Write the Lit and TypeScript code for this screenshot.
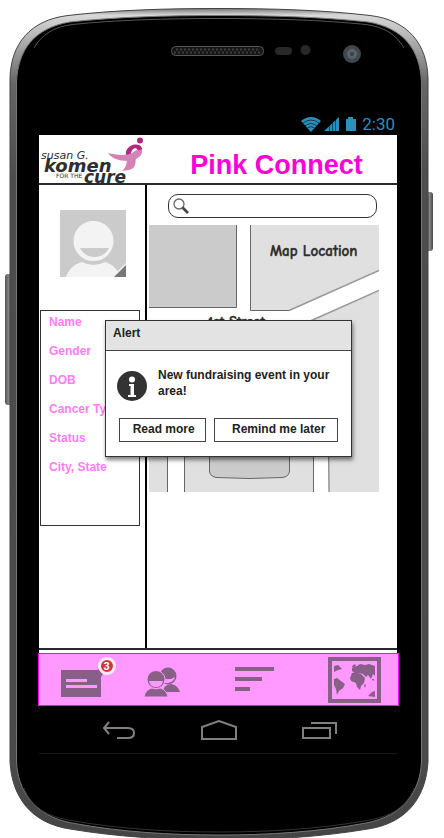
import { LitElement, html, css } from "lit";
import { customElement, state } from "lit/decorators.js";

const FIELDS = ["Name", "Gender", "DOB", "Cancer Type", "Status", "City, State"];

@customElement("phone-case")
class PhoneCase extends LitElement {
  static styles = css`
    :host { display: block; }
    svg { display: block; width: 100%; height: 100%; }
  `;
  render() {
    return html`
      <svg viewBox="0 0 444 838" preserveAspectRatio="none" aria-hidden="true">
        <defs>
          <linearGradient id="metal" x1="0" y1="0" x2="0" y2="1">
            <stop offset="0" stop-color="#777" />
            <stop offset="0.008" stop-color="#d8d8d8" />
            <stop offset="0.03" stop-color="#bbb" />
            <stop offset="0.09" stop-color="#666" />
            <stop offset="0.2" stop-color="#4e4e4e" />
            <stop offset="0.9" stop-color="#4a4a4a" />
            <stop offset="1" stop-color="#444" />
          </linearGradient>
          <linearGradient id="key" x1="0" y1="0" x2="1" y2="0">
            <stop offset="0" stop-color="#555" />
            <stop offset="0.5" stop-color="#888" />
            <stop offset="1" stop-color="#444" />
          </linearGradient>
        </defs>
        <rect x="5" y="274" width="8" height="131" rx="3" fill="url(#key)" />
        <rect x="426" y="192" width="7" height="59" rx="3" fill="url(#key)" />
        <path fill="url(#metal)" stroke="#444" stroke-width="1"
          d="M10 78C11 44 30 20 68 15.500C115 10 165 8.500 219 8.500S323 10 370 15.500C408 20 427 44 428 78V762C426 796 408 823 368 829C320 837 270 840 219 840S118 837 70 829C30 823 12 796 10 762Z" />
        <path fill="#000" stroke="#777" stroke-width="1"
          d="M16.500 82C18 50 34 28 70 22C116 17 165 15.500 219 15.500S322 17 368 22C404 28 420 50 421.500 82V762C420 791 404 816 366 823C318 832 268 835 219 835S120 832 72 823C34 816 18 791 16.500 762Z" />
        <path fill="none" stroke="#555" stroke-width="1"
          d="M34 48C42 34 54 27 72 24.500C116 20 165 18.500 219 18.500S322 20 366 24.500C384 27 396 34 404 48" />
        <path fill="none" stroke="#333" stroke-width="1"
          d="M24 788C31 806 46 817 74 821C120 829 168 832 219 832S318 829 364 821C392 817 407 806 414 788" />
      </svg>
    `;
  }
}

@customElement("komen-logo")
class KomenLogo extends LitElement {
  static styles = css`
    :host { display: block; }
    svg { display: block; overflow: visible; }
    text { font-family: "DejaVu Sans", sans-serif; font-style: italic; fill: #2e2e2e; }
    .small { font-size: 11px; }
    .tiny { font-size: 6px; font-style: normal; }
    .big { font-size: 18px; font-weight: 700; }
    .end { font-size: 17px; }
  `;
  render() {
    return html`
      <svg width="106" height="48" viewBox="0 0 106 48" role="img" aria-label="Susan G. Komen for the Cure">
        <text class="small" x="2" y="24">susan G.</text>
        <text class="big" x="5" y="37">komen</text>
        <text class="tiny" x="17" y="43">FOR THE</text>
        <text class="big end" x="45" y="48">cure</text>
        <circle cx="101" cy="5.500" r="3" fill="#b02a7c" />
        <path fill="#b02a7c" d="M87 20C86 14 91 10 96 9.500C101 9 104 12 103 16L99 17C99 13 96 12.500 94 14C92 16 92 19 91 21Z" />
        <path fill="#d583b4" d="M69 18C76 20 88 21 93 18C96 16 98 14 99 15.500L103 14C104 19 101 22 97 24C96 29 97 33 90 35L83 36C87 33 87 29 88 26C80 26 72 23 69 18Z" />
      </svg>
    `;
  }
}

@customElement("street-map")
class StreetMap extends LitElement {
  static styles = css`
    :host { display: block; }
    svg { display: block; width: 100%; height: auto; }
    text {
      font: 700 15px "Comic Sans MS", "Comic Neue", "Open Sans", sans-serif;
      fill: #2b2b2b;
      stroke: #2b2b2b;
      stroke-width: 0.4px;
    }
    .street { font-size: 14px; }
    .land { fill: #e0e0e0; }
    .block { fill: #cbcbcb; }
    .edge { fill: none; stroke: #666; stroke-width: 1; }
    .road { fill: none; stroke: #999; stroke-width: 1.4; }
  `;
  render() {
    return html`
      <svg viewBox="0 0 230 267" role="img" aria-label="Map">
        <rect class="block" width="88" height="83" />
        <path class="edge" d="M87.500 0V82.500H0" />
        <path class="land" d="M101 0H230V46L141 86H101Z" />
        <path class="edge" d="M101.500 0V85.500H140" />
        <path class="road" d="M140 85.500L230 45.500" />
        <path class="land" d="M230 66L150 101L180 200V267H230Z" />
        <path class="road" d="M230 65.500L150 101" />
        <path class="edge" d="M179.500 200L180 267" />
        <path class="land" d="M0 110H19V267H0Z" />
        <path class="edge" d="M18.500 110V267" />
        <path class="land" d="M35 110H165V267H35Z" />
        <path class="edge" d="M35.500 110V267M164.500 110V267" />
        <path class="block" d="M60 190V246Q61 252 68 252.500L100 253.500L133 252.500Q140 252 140.500 246V190Z" />
        <path class="edge" d="M60.500 190V246Q61 252 68 252.500L100 253.500L133 252.500Q140 252 140.500 246V190" />
        <text x="121" y="31">Map Location</text>
        <text class="street" x="59" y="101">1st Street</text>
      </svg>
    `;
  }
}

const messageIcon = html`
  <svg width="50" height="34" viewBox="0 0 50 34" aria-hidden="true">
    <path fill="#875f87" d="M3 7H39L46 3V9L43 14V34H3Z" />
    <path fill="#ff99ff" d="M8 16H29V19H8ZM8 22H39V25H8Z" />
  </svg>`;

const peopleIcon = html`
  <svg width="36" height="34" viewBox="0 -4 36 34" aria-hidden="true">
    <g fill="#875f87">
      <circle cx="24" cy="9" r="8.500" />
      <path d="M19 25C20 19 22 18 27 17C32 18 34 20 36 25Z" />
    </g>
    <path fill="#ff99ff" d="M19 11Q25 14 31 10Q30 15 24 16L20 16Z" />
    <g fill="#875f87" stroke="#ff99ff" stroke-width="1">
      <path d="M0 30C1 24 5 22 8 21Q12 23 16 21C20 22 23 25 24 30Z" />
      <circle cx="12" cy="12.500" r="9" />
    </g>
    <path fill="#ff99ff" d="M5 14H19Q18 20 12 20Q6 20 5 14Z" />
  </svg>`;

const listIcon = html`
  <svg width="40" height="30" viewBox="0 0 40 30" aria-hidden="true">
    <path fill="#875f87" d="M0 2H39V6H0ZM0 12H27V16H0ZM0 22H15V26H0Z" />
  </svg>`;

const worldIcon = html`
  <svg width="53" height="46" viewBox="0 0 53 46" aria-hidden="true">
    <g fill="#875f87">
      <path fill-rule="evenodd" d="M0 0H53V46H0ZM4 4V42H49V4Z" />
      <path d="M6 9L10 8L14 12L10 13L6 15ZM6 22L9 21L13 24L17 27L15 31L11 34L9 38L8 32L6 28Z" />
      <path d="M22 21L24 16L28 15L33 17L37 21L36 26L33 29L32 33L29 30L28 26L23 24Z" />
      <path d="M24 11L29 9L32 7L37 8L41 7L47 9V19L45 17L43 22L40 18L38 20L35 17L31 16L27 16L24 14Z" />
      <path d="M24 9L27 7L28 9L25 11ZM36 28L38 27L37 31ZM44 22L46 22L46 24L44 23ZM40 39L44 35L47 34V40Z" />
    </g>
  </svg>`;

const backIcon = html`
  <svg width="34" height="20" viewBox="0 0 34 20" aria-hidden="true">
    <path fill="none" stroke="#808080" stroke-width="2" d="M7 2L2 8L7 14M2 8H26Q32 8 32 13Q32 18 26 18H15" />
  </svg>`;
const homeIcon = html`
  <svg width="36" height="20" viewBox="0 0 36 20" aria-hidden="true">
    <path fill="none" stroke="#808080" stroke-width="2" d="M1 19V7L18 1L35 7V19Z" />
  </svg>`;
const recentsIcon = html`
  <svg width="36" height="20" viewBox="0 0 36 20" aria-hidden="true">
    <path fill="none" stroke="#808080" stroke-width="2" d="M1 8H28V18H1ZM9 3H34V14" />
  </svg>`;

@customElement("app-root")
class AppRoot extends LitElement {
  @state() private alertOpen = true;

  static styles = css`
    :host {
      display: block;
      background: #fff;
      font-family: "Liberation Sans", Arial, sans-serif;
      font-size: 12px;
      color: #222;
    }
    * { box-sizing: border-box; }
    button { font: inherit; color: inherit; padding: 0; margin: 0; border: 0; background: none; cursor: pointer; }
    svg { display: block; }

    .device {
      position: relative;
      display: flex;
      flex-direction: column;
      min-height: 100vh;
      padding: 0 47px 84px 39px;
      overflow: hidden;
    }
    .case { position: absolute; inset: 0; }
    .brow {
      position: relative;
      height: 113px;
      padding: 43px 35px 0 132px;
      display: flex;
      align-items: flex-start;
      justify-content: space-between;
    }
    .status {
      position: relative;
      height: 22px;
      padding-right: 2px;
      display: flex;
      align-items: center;
      justify-content: flex-end;
      gap: 5px;
      color: #2b8fbd;
      font: 17px/22px Roboto, sans-serif;
    }

    .screen {
      position: relative;
      flex: 1;
      display: flex;
      flex-direction: column;
      background: #fff;
    }
    header {
      display: flex;
      height: 50px;
      border-bottom: 2px solid #2a2a2a;
    }
    h1 {
      flex: 1;
      margin: 0;
      padding-left: 11px;
      text-align: center;
      font-size: 27px;
      line-height: 60px;
      color: #ff00d4;
    }
    .body {
      flex: 1;
      display: grid;
      grid-template-columns: 108px 1fr;
      margin-bottom: 3px;
      border-bottom: 2px solid #2a2a2a;
    }
    aside { border-right: 2px solid #000; padding: 25px 5px 0 1px; }
    .avatar { margin: 0 auto 33px 20px; }
    .details {
      list-style: none;
      margin: 0;
      padding: 0 0 0 8px;
      height: 216px;
      border: 1px solid #333;
      overflow: hidden;
      white-space: nowrap;
      font-weight: 700;
      color: #ff7cf6;
    }
    .details li { height: 29px; line-height: 22px; }

    main { padding: 9px 18px 0 2px; }
    .search {
      display: flex;
      align-items: center;
      gap: 4px;
      height: 24px;
      margin: 0 2px 7px 19px;
      padding: 0 8px 0 4px;
      border: 1px solid #333;
      border-radius: 10px;
    }
    .search input {
      flex: 1;
      min-width: 0;
      border: 0;
      outline: 0;
      padding: 0;
      background: none;
      font: inherit;
    }

    .alert {
      position: absolute;
      top: 185px;
      left: 66px;
      right: 45px;
      height: 137px;
      background: #fff;
      border: 1px solid #333;
      box-shadow: 1px 3px 4px rgba(0, 0, 0, 0.5);
      font-weight: 700;
    }
    .alert h2 {
      margin: 0;
      height: 30px;
      padding-left: 7px;
      font-size: 12px;
      line-height: 24px;
      background: #e3e3e3;
      border-bottom: 1px solid #444;
    }
    .message { display: flex; gap: 11px; padding: 16px 8px 0 11px; }
    .message svg { flex: none; margin-top: 4px; }
    .message p { margin: 0; line-height: 16px; }
    .actions { display: flex; gap: 8px; padding: 17px 13px 0 13px; }
    .actions button {
      height: 24px;
      border: 1px solid #444;
      font-weight: 700;
      line-height: 20px;
      padding: 0 0 2px 2px;
    }
    .more { flex: 88; }
    .actions .later { flex: 123; padding-left: 5px; }

    .tabs {
      position: relative;
      display: grid;
      grid-template-columns: 87fr 72fr 113fr 87fr;
      align-items: center;
      justify-items: center;
      height: 53px;
      margin: 0 -2px 0 -1px;
      background: #ff99ff;
      border: 1px solid #f0f;
    }
    .tab { position: relative; }
    .badge {
      position: absolute;
      top: -6px;
      right: -8px;
      width: 18px;
      height: 18px;
      border: 3px solid #f6ecf4;
      border-radius: 50%;
      background: #d3343c;
      color: #fff;
      font-size: 11px;
      font-weight: 700;
      line-height: 12px;
      text-align: center;
    }
    .nav {
      position: relative;
      display: flex;
      align-items: center;
      justify-content: space-between;
      height: 48px;
      padding: 0 59px 0 63px;
      border-bottom: 1px solid #161616;
    }
  `;

  private close() { this.alertOpen = false; }

  render() {
    return html`
      <div class="device">
        <phone-case class="case"></phone-case>
        <div class="brow">
          <svg width="142" height="16" viewBox="0 0 142 16" aria-hidden="true">
            <rect x="0.500" y="3.500" width="92" height="9" rx="4" fill="#161616" stroke="#555" />
            <path d="M5 6.500H89M3 9.500H90" stroke="#3c3c3c" stroke-width="2" stroke-dasharray="2 2" />
            <rect x="104" y="4" width="17" height="8" rx="4" fill="#292727" />
            <circle cx="134.500" cy="7" r="5" fill="#292727" />
          </svg>
          <svg width="20" height="22" viewBox="-3 0 20 22" aria-hidden="true">
            <circle cx="7" cy="11" r="9" fill="#41474b" />
            <circle cx="7" cy="11" r="5" fill="#59646a" />
            <circle cx="7" cy="11" r="2" fill="#35424c" />
          </svg>
        </div>
        <div class="status">
          <svg width="56" height="16" viewBox="0 0 56 16" aria-hidden="true">
            <path fill="#2b8fbd" d="M0 5Q10 -3 20 5L10 16Z" />
            <path fill="none" stroke="#000" stroke-width="1" opacity="0.6" d="M2 7Q10 1 18 7M4 10Q10 5 16 10M6 12.500Q10 9 14 12.500" />
            <path fill="#2b8fbd" d="M23 15L38 1V15ZM45 3H47V1H52V3H55V15H45Z" />
            <path stroke="#000" stroke-width="1" d="M28.500 0V15M31.500 0V15M34.500 0V15" opacity="0.5" />
          </svg>
          <span>2:30</span>
        </div>

        <div class="screen">
          <header>
            <komen-logo></komen-logo>
            <h1>Pink Connect</h1>
          </header>
          <div class="body">
            <aside>
              <svg class="avatar" width="66" height="67" viewBox="0 0 66 67" role="img" aria-label="Profile picture">
                <rect width="66" height="67" fill="#cbcbcb" />
                <path fill="#f3f3f3" d="M6 67C8 60 14 54 22 52Q33 58 45 52C53 54 58 60 60 67Z" />
                <circle cx="33.500" cy="31" r="21.500" fill="#f3f3f3" stroke="#cbcbcb" stroke-width="3" />
                <path fill="#cbcbcb" d="M20 38H49Q44 47 34.500 47Q25 47 20 38Z" />
                <path fill="#f3f3f3" d="M52 67L66 53V67Z" />
                <path fill="#777" d="M54 67L66 55V67Z" />
              </svg>
              <ul class="details">
                ${FIELDS.map((f) => html`<li>${f}</li>`)}
              </ul>
            </aside>
            <main>
              <label class="search">
                <svg width="17" height="17" viewBox="0 0 17 17" aria-hidden="true">
                  <circle cx="6" cy="6" r="5" fill="none" stroke="#666" stroke-width="1.300" />
                  <path d="M9.500 9.500L15 15" stroke="#444" stroke-width="2.600" />
                </svg>
                <input type="search" aria-label="Search" />
              </label>
              <street-map></street-map>
            </main>
          </div>
          ${this.alertOpen
            ? html`
                <section class="alert" role="alertdialog" aria-labelledby="alert-title">
                  <h2 id="alert-title">Alert</h2>
                  <div class="message">
                    <svg width="30" height="30" viewBox="0 0 30 30" aria-hidden="true">
                      <circle cx="15" cy="15" r="15" fill="#333" />
                      <circle cx="15" cy="8.500" r="3" fill="#fff" />
                      <path fill="#fff" d="M12 13H17V24H19V26H11V24H13.500V15H12Z" />
                    </svg>
                    <p>New fundraising event in your area!</p>
                  </div>
                  <div class="actions">
                    <button class="more" @click=${this.close}>Read more</button>
                    <button class="later" @click=${this.close}>Remind me later</button>
                  </div>
                </section>`
            : null}
        </div>

        <nav class="tabs" aria-label="Sections">
          <button class="tab" aria-label="Messages, 3 new">${messageIcon}<span class="badge">3</span></button>
          <button class="tab" aria-label="Friends">${peopleIcon}</button>
          <button class="tab" aria-label="List">${listIcon}</button>
          <button class="tab" aria-label="Map">${worldIcon}</button>
        </nav>
        <div class="nav">
          <button aria-label="Back">${backIcon}</button>
          <button aria-label="Home">${homeIcon}</button>
          <button aria-label="Recent apps">${recentsIcon}</button>
        </div>
      </div>
    `;
  }
}
